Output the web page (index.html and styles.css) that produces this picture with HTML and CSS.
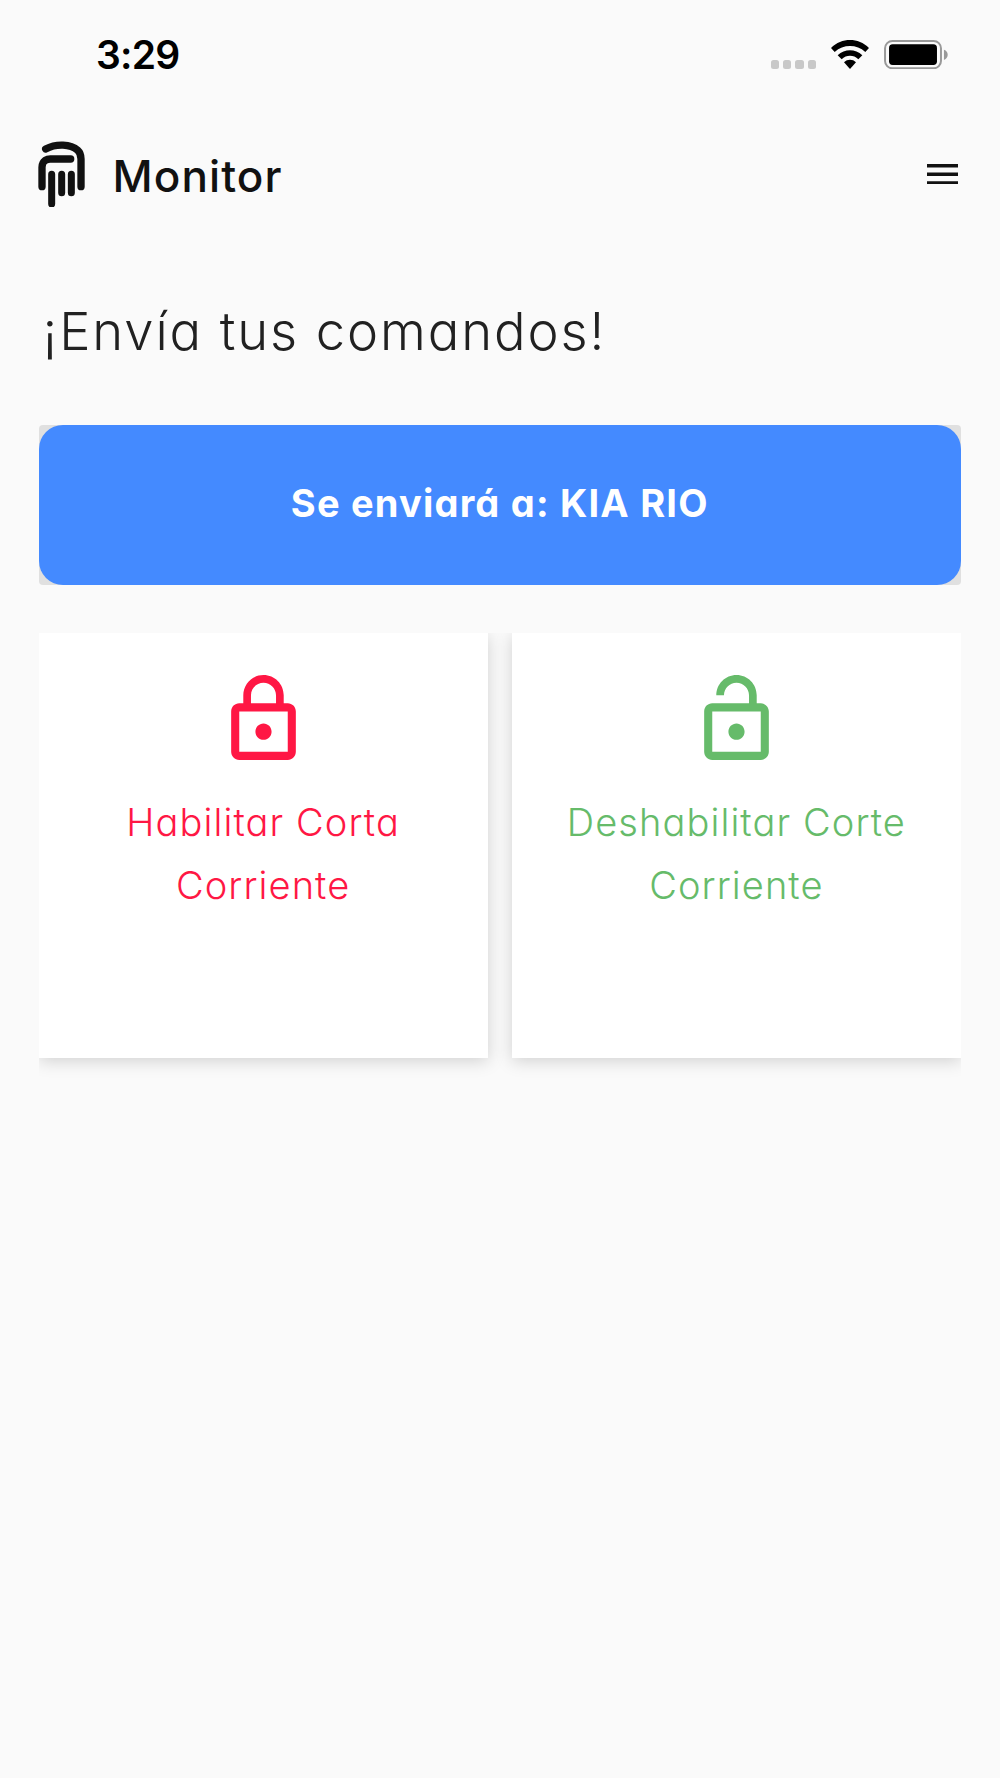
FILE: index.html
```html
<!DOCTYPE html>
<html lang="es">
    <head>
        <meta charset="utf-8">
        <title>Monitor</title>
        <link rel="stylesheet" href="styles.css">
    </head>
    <body>
        <div class="status">
            <span class="status__time">3:29</span>
            <div class="status__icons">
                <div class="signal"><i></i><i></i><i></i><i></i></div>
                <svg class="wifi" viewBox="0 0 114 88">
                    <path d="M0 24C32-8 82-8 114 24L103 36C77 12 37 12 11 36Z" />
                    <path d="M20 46C41 26 73 26 94 46L82 58C68 44 46 44 32 58Z" />
                    <path d="M39 67C49 57 65 57 75 67L57 87Z" />
                </svg>
                <svg class="battery" viewBox="0 0 192 88">
                    <rect x="3" y="3" width="168" height="82" rx="22" fill="none" stroke="#999" stroke-width="6" />
                    <rect x="15" y="13" width="144" height="62" rx="11" />
                    <path d="M180 29C195 34 195 55 180 60Z" fill="#999" />
                </svg>
            </div>
        </div>

        <header class="header">
            <svg class="header__logo" viewBox="55 62 140 200">
                <path d="M78 86C110 69 153 71 174 90Q184 99 184 116V199" stroke-width="22" />
                <path d="M67 199V141Q67 127 77 120Q83 116 92 116H153" stroke-width="22" />
                <path d="M96 162V251M126 162V217M155 162V217" stroke-width="21" />
            </svg>
            <span class="header__name">Monitor</span>
            <svg class="header__menu" viewBox="3 6 18 12">
                <path d="M3 18h18v-2H3v2zm0-5h18v-2H3v2zm0-7v2h18V6H3z" />
            </svg>
        </header>

        <main class="content">
            <h1 class="title">¡Envía tus comandos!</h1>

            <div class="send">
                <button class="send__button">Se enviará a: KIA RIO</button>
            </div>

            <div class="cards">
                <div class="card card--lock">
                    <svg class="card__icon" viewBox="0 0 24 24">
                        <path d="M18 8h-1V6c0-2.76-2.24-5-5-5S7 3.24 7 6v2H6c-1.1 0-2 .9-2 2v10c0 1.1.9 2 2 2h12c1.1 0 2-.9 2-2V10c0-1.1-.9-2-2-2zM8.9 6c0-1.71 1.39-3.1 3.1-3.1s3.1 1.39 3.1 3.1v2H8.9V6zM18 20H6V10h12v10zm-6-3c1.1 0 2-.9 2-2s-.9-2-2-2-2 .9-2 2 .9 2 2 2z" />
                    </svg>
                    <p class="card__text">Habilitar Corta<br>Corriente</p>
                </div>
                <div class="card card--unlock">
                    <svg class="card__icon" viewBox="0 0 24 24">
                        <path d="M12 17c1.1 0 2-.9 2-2s-.9-2-2-2-2 .9-2 2 .9 2 2 2zm6-9h-1V6c0-2.76-2.24-5-5-5S7 3.24 7 6h1.9c0-1.71 1.39-3.1 3.1-3.1s3.1 1.39 3.1 3.1v2H6c-1.1 0-2 .9-2 2v10c0 1.1.9 2 2 2h12c1.1 0 2-.9 2-2V10c0-1.1-.9-2-2-2zm0 12H6V10h12v10z" />
                    </svg>
                    <p class="card__text">Deshabilitar Corte<br>Corriente</p>
                </div>
            </div>
        </main>
    </body>
</html>
```

FILE: styles.css
```css
* {
    box-sizing: border-box;
}

body {
    margin: 0;
    min-height: 1778px;
    background-color: #fafafa;
    color: #212121;
    font-family: Inter, sans-serif;
    font-feature-settings: "cv11";
}

.status {
    display: flex;
    justify-content: space-between;
    height: 110px;
    padding: 0 52px 0 96px;
    color: #000;
}

.status__time {
    padding-top: 31px;
    font-size: 39px;
    line-height: 48px;
    font-weight: 600;
    letter-spacing: -0.8px;
}

.status__icons {
    display: flex;
    align-items: flex-end;
    height: 69px;
}

.signal {
    display: flex;
    gap: 4px;
    margin-right: 15px;
}

.signal i {
    width: 8.3px;
    height: 9px;
    border-radius: 2.5px;
    background-color: #c8c8c8;
}

.wifi {
    width: 38px;
    height: 29.3px;
    margin-right: 15px;
}

.battery {
    width: 64px;
    height: 29.3px;
}

.header {
    display: flex;
    align-items: center;
    height: 128px;
    padding: 0 42.5px 0 38.3px;
}

.header__logo {
    width: 46.7px;
    height: 66.7px;
    fill: none;
    stroke: #111;
    stroke-linecap: round;
}

.header__name {
    margin-left: 27.5px;
    padding-top: 4px;
    color: #111;
    font-size: 44px;
    line-height: 60px;
    font-weight: 500;
    letter-spacing: 1.1px;
}

.header__menu {
    width: 31px;
    height: 20.7px;
    margin-left: auto;
    fill: #111;
}

.content {
    padding: 0 39px 0 38.5px;
}

.title {
    margin: 0;
    padding: 51px 0 0 4px;
    height: 187px;
    font-size: 52.5px;
    line-height: 84px;
    font-weight: 300;
    letter-spacing: 1.9px;
}

.send {
    height: 159.5px;
    border-radius: 4px;
    background-color: #e0e0e0;
}

.send__button {
    width: 100%;
    height: 100%;
    padding: 0 0 4px;
    border: 0;
    border-radius: 24px;
    background-color: #448aff;
    color: #fff;
    font: inherit;
    font-size: 38px;
    font-weight: 700;
    letter-spacing: 1.2px;
}

/* clips the card shadows at the sides and top */
.cards {
    display: flex;
    gap: 24px;
    margin-top: 48.5px;
    padding-bottom: 40px;
    overflow: hidden;
}

.card {
    flex: 1;
    height: 425px;
    padding-top: 38px;
    background-color: #fff;
    box-shadow: 0 3px 16px rgba(0, 0, 0, 0.17);
    text-align: center;
}

.card--lock {
    color: #ff1744;
}

.card--unlock {
    color: #66bb6a;
}

.card__icon {
    display: block;
    width: 97px;
    height: 97px;
    margin: 0 auto;
    fill: currentColor;
}

.card__text {
    margin: 23px 0 0;
    font-size: 38px;
    line-height: 63px;
    font-weight: 300;
    letter-spacing: 1.1px;
}
```
